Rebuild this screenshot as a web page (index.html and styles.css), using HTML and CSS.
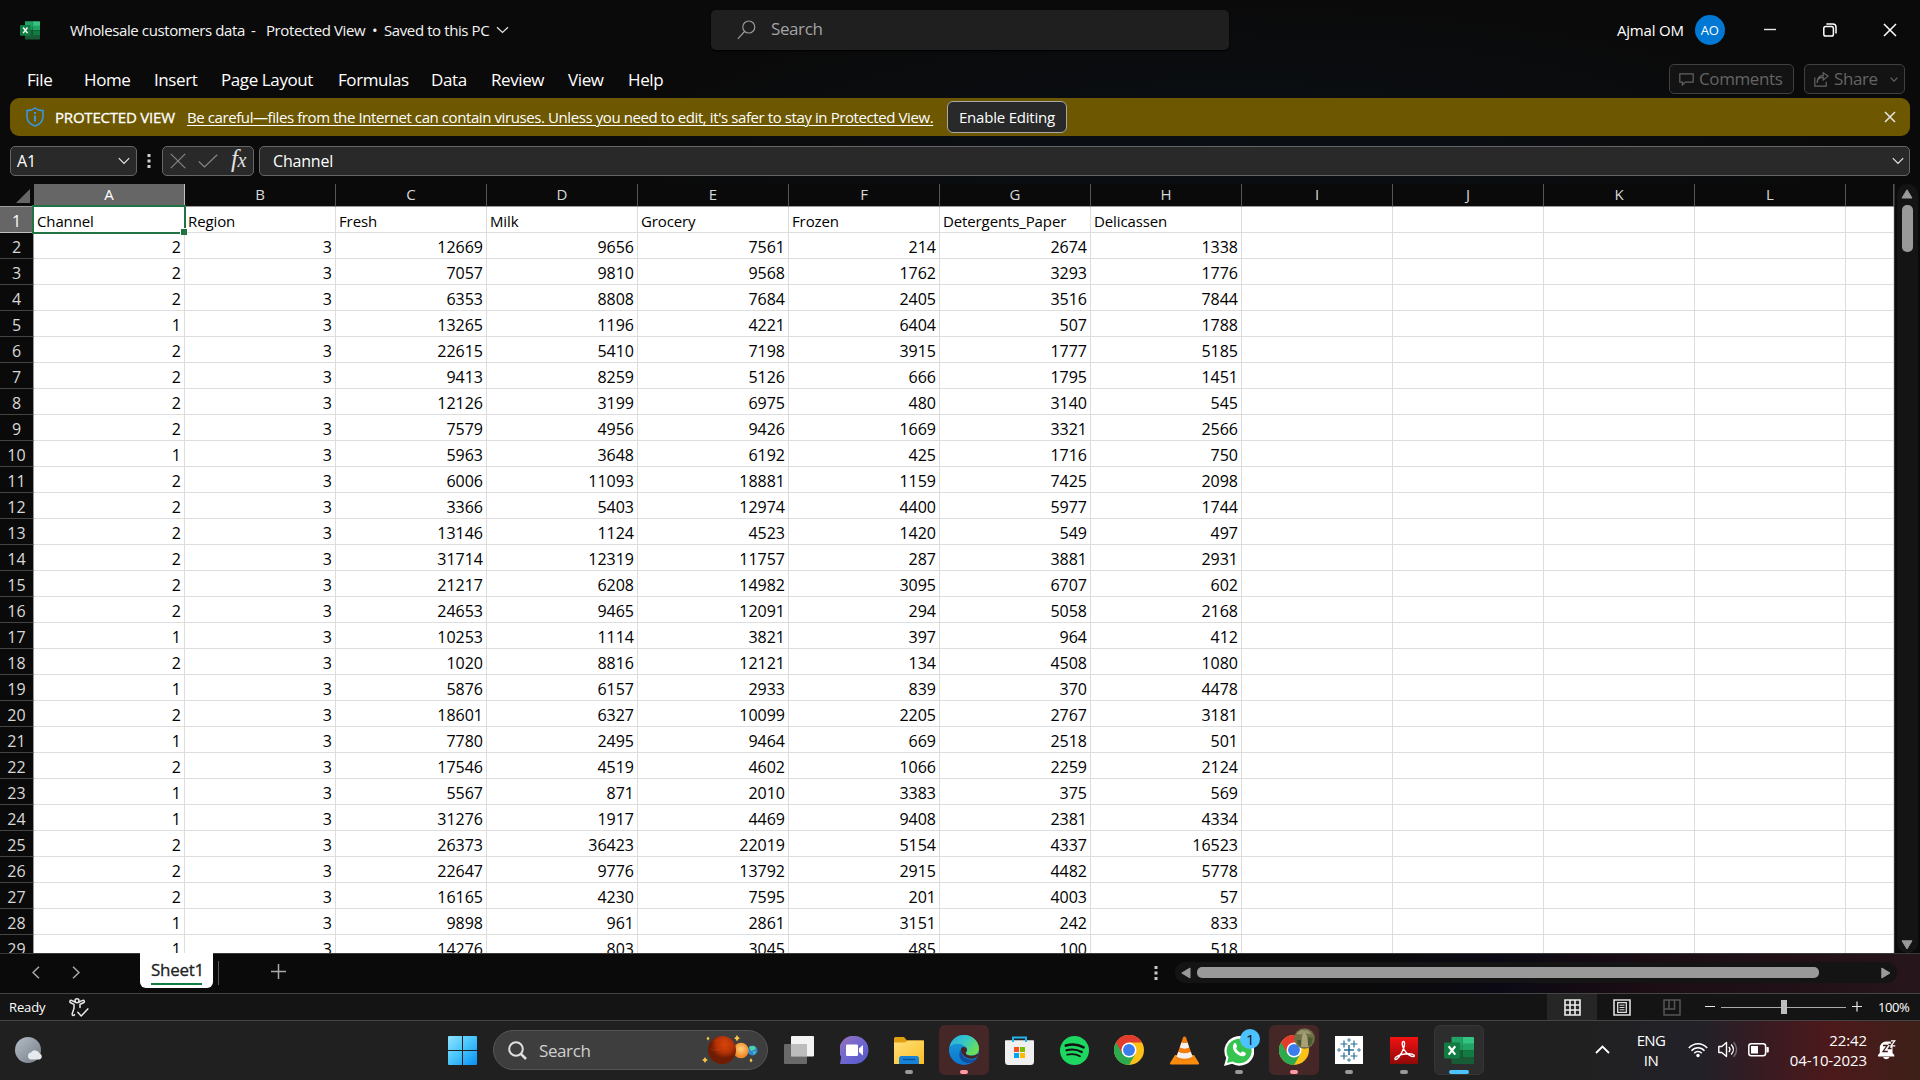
FILE: index.html
```html
<!DOCTYPE html>
<html lang="en">
<head>
<meta charset="utf-8">
<title>Wholesale customers data - Excel</title>
<link rel="stylesheet" href="styles.css">
</head>
<body>
<div class="screen">
  <header class="titlebar">
    <svg class="app-logo" width="20" height="20" viewBox="0 0 32 32"><use href="#excel"/></svg>
    <div class="doc-title"><span class="t1">Wholesale customers data</span><span class="t2">-</span><span class="t3">Protected View</span><span class="t4">•</span><span class="t5">Saved to this PC</span>
      <svg width="13" height="8" viewBox="0 0 13 8" class="line"><path d="M1 1.2l5.5 5.3L12 1.2"/></svg></div>
    <div class="search-top">
      <svg width="19" height="20" viewBox="0 0 19 20" class="line dim"><circle cx="11.8" cy="7" r="6"/><path d="M7.6 11.5L.8 18.8"/></svg>
      <span>Search</span>
    </div>
    <div class="account"><span>Ajmal OM</span><span class="avatar">AO</span></div>
    <div class="winbtns">
      <svg width="14" height="14" viewBox="0 0 14 14" class="line"><path d="M1 6.5h12" stroke-width="1.4"/></svg>
      <svg width="14" height="14" viewBox="0 0 14 14" class="line bold"><rect x=".8" y="3.4" width="9.6" height="9.6" rx="1.8"/><path d="M3.4 1h6.4A3.2 3.2 0 0 1 13 4.200v6.400"/></svg>
      <svg width="14" height="14" viewBox="0 0 14 14" class="line bold"><path d="M1 1l12 12M13 1L1 13"/></svg>
    </div>
  </header>

  <nav class="ribbon">
    <div class="tabs"><span>File</span><span>Home</span><span>Insert</span><span>Page Layout</span><span>Formulas</span><span>Data</span><span>Review</span><span>View</span><span>Help</span></div>
    <div class="ribbon-btn comments">
      <svg width="15" height="13" viewBox="0 0 15 13" class="line grey"><path d="M.8.8h13.400v8.400H6.200L3.400 12V9.200H.8z"/></svg><span>Comments</span>
    </div>
    <div class="ribbon-btn share">
      <svg width="15" height="15" viewBox="0 0 15 15" class="line grey"><path d="M.8 5.500v8.700h11.400V9.800M3.200 11c0-3.500 2-5.600 6-5.800V8l4.800-3.900L9.200.8v2.600C5.500 3.700 3.200 6.500 3.200 11z"/></svg><span>Share</span>
      <svg width="8" height="5" viewBox="0 0 8 5" class="line grey chev"><path d="M.6.6L4 4.200 7.400.6"/></svg>
    </div>
  </nav>

  <div class="protected">
    <svg class="shield" width="18" height="20" viewBox="0 0 18 20"><path d="M9 1C7 2.700 4.200 3.500 1 3.600V9.500c0 4.700 3 7.800 8 9.600 5-1.800 8-4.900 8-9.600V3.600C13.800 3.500 11 2.700 9 1z" fill="none" stroke="#3a96dd" stroke-width="1.600"/><path d="M9 8.500v6M9 5v2" stroke="#3a96dd" stroke-width="2"/></svg>
    <span class="pv">PROTECTED VIEW</span>
    <span class="warn">Be careful—files from the Internet can contain viruses. Unless you need to edit, it's safer to stay in Protected View.</span>
    <span class="enable">Enable Editing</span>
    <svg class="line close" width="12" height="12" viewBox="0 0 12 12"><path d="M1 1l10 10M11 1L1 11" stroke-width="1.500"/></svg>
  </div>

  <div class="formula">
    <div class="field namebox"><span>A1</span><svg width="12" height="8" viewBox="0 0 12 8" class="line"><path d="M.8 1.200L6 6.500l5.200-5.300"/></svg></div>
    <svg class="dots" width="4" height="14" viewBox="0 0 4 14"><path d="M.5 0h3v3h-3zM.5 5.500h3v3h-3zM.5 11h3v3h-3z" fill="#d0d0d0"/></svg>
    <div class="field fx">
      <svg width="16" height="16" viewBox="0 0 16 16" class="line mid"><path d="M.8.8l14.400 14.400M15.200.8L.8 15.200"/></svg>
      <svg width="20" height="14" viewBox="0 0 20 14" class="line mid"><path d="M.8 7.500L6.500 13 19.200.8"/></svg>
      <span class="fxi">f<small>x</small></span>
    </div>
    <div class="field input"><span>Channel</span><svg width="12" height="8" viewBox="0 0 12 8" class="line"><path d="M.8 1.200L6 6.500l5.200-5.300"/></svg></div>
  </div>

  <main class="work">
    <div class="sheet" id="sheet"></div>
    <div class="vscroll">
      <svg width="12" height="10" viewBox="0 0 12 10"><path d="M6 .8L11 9H1z" fill="#999" stroke="#999" stroke-linejoin="round"/></svg>
      <div class="vthumb"></div>
      <svg class="down" width="12" height="10" viewBox="0 0 12 10"><path d="M6 9L11 .8H1z" fill="#999" stroke="#999" stroke-linejoin="round"/></svg>
    </div>
  </main>

  <div class="sheetbar">
    <svg class="line nav-l" width="8" height="13" viewBox="0 0 8 13"><path d="M7 .8L1 6.500l6 5.700"/></svg>
    <svg class="line nav-r" width="8" height="13" viewBox="0 0 8 13"><path d="M1 .8l6 5.700-6 5.700"/></svg>
    <div class="sheet-tab"><span>Sheet1</span></div>
    <div class="sep"></div>
    <svg class="line add" width="15" height="15" viewBox="0 0 15 15"><path d="M7.500 0v15M0 7.500h15"/></svg>
    <svg class="dots hdots" width="4" height="14" viewBox="0 0 4 14"><path d="M.5 0h3v3h-3zM.5 5.500h3v3h-3zM.5 11h3v3h-3z" fill="#c8c8c8"/></svg>
    <div class="hscroll">
      <svg width="10" height="12" viewBox="0 0 10 12"><path d="M.8 6L9 11V1z" fill="#999" stroke="#999" stroke-linejoin="round"/></svg>
      <div class="hthumb"></div>
      <svg class="right" width="10" height="12" viewBox="0 0 10 12"><path d="M9 6L.8 11V1z" fill="#999" stroke="#999" stroke-linejoin="round"/></svg>
    </div>
  </div>

  <footer class="status">
    <span class="ready">Ready</span>
    <svg class="access" width="20" height="19" viewBox="0 0 20 19"><g fill="none" stroke="#e8e8e8" stroke-width="1.500" stroke-linecap="round" stroke-linejoin="round"><circle cx="8" cy="2.800" r="2"/><path d="M6 4L2.500 2.400C.8 2 .2 4 1.700 4.700L5 6.300v4L3.200 15.800c-.3 2 1.600 2.200 2.300.8M10 4l3.700-1.600c1.700-.4 2.300 1.600.8 2.300L11 6.300v3.200"/><path d="M8.800 14.300l3.400 3.600 6.600-7"/></g></svg>
    <div class="view on"><svg width="17" height="17" viewBox="0 0 17 17"><path d="M1 1h15v15H1zM6 1v15M11 1v15M1 6h15M1 11h15" fill="none" stroke="#eee" stroke-width="1.600"/></svg></div>
    <div class="view"><svg width="18" height="17" viewBox="0 0 18 17"><path d="M1 1h16v15H1z" fill="none" stroke="#ddd" stroke-width="1.600"/><path d="M4.700 3.700h8.600v9.600H4.700z" fill="none" stroke="#ddd" stroke-width="1.300"/><path d="M6.500 6.200h5M6.500 8.500h5M6.500 10.800h5" stroke="#ddd"/></svg></div>
    <div class="view"><svg width="18" height="17" viewBox="0 0 18 17"><path d="M1 1h16v15H1zM1 10h10.500V1M6 1v9" fill="none" stroke="#555" stroke-width="1.500"/></svg></div>
    <div class="zoom">
      <svg width="158" height="16" viewBox="0 0 158 16"><path d="M1 7.500h10M148 7.500h10M153 2.500v10" stroke="#e8e8e8" stroke-width="1.200"/><path d="M17 8.500h125" stroke="#aaa"/><path d="M77 1h6v14h-6z" fill="#bdbdbd"/></svg>
      <span>100%</span>
    </div>
  </footer>

  <div class="taskbar">
    <svg class="weather" width="28" height="27" viewBox="0 0 28 27"><circle cx="13" cy="13" r="13" fill="url(#moon)"/><path d="M15.500 22.500a3.600 3.600 0 0 1 .5-7 5 5 0 0 1 8.700.9 3.200 3.200 0 0 1-.2 6.100z" fill="#e6eaee"/></svg>
    <div class="apps">
      <div class="app"><svg width="29" height="29" viewBox="0 0 29 29"><path d="M0 1a1 1 0 0 1 1-1h13v14H0zM15 0h13a1 1 0 0 1 1 1v13H15zM0 15h14v14H1a1 1 0 0 1-1-1zM15 15h14v13a1 1 0 0 1-1 1H15z" fill="url(#win)"/></svg></div>
      <div class="pill">
        <svg width="19" height="19" viewBox="0 0 19 19" fill="none" stroke="#e0e0e0"><circle cx="8" cy="8" r="6.800" stroke-width="2"/><path d="M13 13l5 5" stroke-width="2.500"/></svg>
        <span>Search</span>
        <svg class="planets" width="56" height="30" viewBox="0 0 56 30"><circle cx="50.500" cy="15.500" r="5" fill="#2c86d8"/><path d="M47 12c3-2 6-1 7 1l-2 2-3 1zM51 17l3-1-2 4z" fill="#4fd6a0"/><circle cx="39" cy="15.500" r="7.700" fill="url(#sun)"/><circle cx="20" cy="15" r="14" fill="url(#mars)"/><path d="M12 6c4-2 8 0 13-1M8 14c6 3 12-2 20 1" stroke="#e0541a" stroke-width="1.500" fill="none" opacity=".2"/><path d="M3 22l1.200 2L6 25l-1.800 1L3 28l-1.200-2L0 25l1.800-1zM35 0l1.200 2L38 3.200l-1.800 1L35 6.500l-1.200-2.300-1.800-1L33.800 2zM6 1.500L7.500 3.500 6 5.500 4.500 3.500zM49 23l1.500 2.500L49 27.500l-1.500-2z" fill="#f6c544"/></svg>
      </div>
      <div class="app"><svg width="30" height="28" viewBox="0 0 30 28"><rect x="7" width="23" height="20.500" rx="1" fill="#f3f3f3"/><rect y="8" width="23" height="20" rx="1" fill="#777" opacity=".85"/><path d="M7 8h16v12.500H7z" fill="#bdbdbd"/></svg></div>
      <div class="app"><svg width="29" height="29" viewBox="0 0 29 29"><path d="M15 0a14 14 0 1 1-1 28H0l1.200-7A14 14 0 0 1 15 0z" fill="url(#chat)"/><rect x="6" y="8.500" width="12" height="11.500" rx="1.200" fill="#fff"/><path d="M19 12.500L23 9v10.500l-4-3.500z" fill="#fff"/></svg></div>
      <div class="app run"><svg width="30" height="27" viewBox="0 0 30 27"><path d="M0 1.500A1.500 1.500 0 0 1 1.500 0H10l3 3.500h17V8H0z" fill="#e0a010"/><path d="M0 5.500h11L13.500 3.500H29a1 1 0 0 1 1 1V27H0z" fill="url(#fold)"/><path d="M5 27v-5.500A2.500 2.500 0 0 1 7.500 19h15a2.500 2.500 0 0 1 2.500 2.500V27z" fill="#1683d8"/><path d="M9 22.500h12" stroke="#0b4f8c" stroke-width="1.300"/></svg></div>
      <div class="app run alert"><svg width="30" height="30" viewBox="0 0 30 30"><circle cx="15" cy="15" r="15" fill="url(#edgeb)"/><path d="M.5 12C3 3 9 0 15 0c9 0 15 6.500 15 13.500 0 5-4 7-7.500 7-4.500 0-6-1.500-5.500-3 1.500-1.600 1.800-3.500 0-5.500C12 7.500 4 7.500.5 12z" fill="url(#edgeg)"/><path d="M12 14.500c-4 5.500-.5 12.500 6 13.500 4.500.5 8.500-2 10-4.500-7 3-15.500.5-16-9z" fill="#134e9e"/><path d="M12 13.500c2-2.800 6-1.500 6 1.500 0 1.500-1.500 2-1.200 3.300.4 1.700 2.800 2.600 6 2.500 2.500 0 4.500-1 5.700-2 1 .6 1 1 .5 1.700-2 2.700-5.500 3.500-8 3-5-.5-9.500-5-9-10z" fill="#462426"/></svg></div>
      <div class="app"><svg width="29" height="29" viewBox="0 0 29 29"><path d="M8 6V1.500h13V6" fill="none" stroke="#22b2ea" stroke-width="2"/><path d="M0 5a.8.800 0 0 1 .8-.8h27.400A.8.800 0 0 1 29 5v20.500a3.500 3.500 0 0 1-3.500 3.500h-22A3.500 3.500 0 0 1 0 25.500z" fill="#efefef"/><path d="M8 1.500V6M21 1.500V6" stroke="#22b2ea" stroke-width="2"/><path d="M9 11h5v5H9z" fill="#f25022"/><path d="M15 11h5v5h-5z" fill="#7fba00"/><path d="M9 17h5v5H9z" fill="#00a4ef"/><path d="M15 17h5v5h-5z" fill="#ffb900"/></svg></div>
      <div class="app"><svg width="29" height="29" viewBox="0 0 29 29"><circle cx="14.500" cy="14.500" r="14.500" fill="#1ed760"/><g fill="none" stroke="#121212" stroke-linecap="round"><path d="M5.800 9.600c6-1.800 12.500-1.200 17.800 1.700" stroke-width="2.600"/><path d="M6.500 14.300c5.500-1.500 10.700-.8 15.300 1.700" stroke-width="2.200"/><path d="M7.200 18.700c4.500-1.200 9-.7 12.800 1.500" stroke-width="1.800"/></g></svg></div>
      <div class="app"><svg width="30" height="30" viewBox="0 0 48 48"><use href="#chrome"/></svg></div>
      <div class="app"><svg width="29" height="29" viewBox="0 0 29 29"><path d="M5 19h19l5 8a1 1 0 0 1-1 1.500H1A1 1 0 0 1 0 27z" fill="#f98b0e"/><path d="M13 1.500a1.600 1.600 0 0 1 3 0L23 22c-3 3.500-14 3.500-17 0z" fill="#f47d0c"/><path d="M11.500 6.500c2 .8 4 .8 6 0l1.700 5c-3 1.500-6.400 1.500-9.400 0zM8.300 15.800c4 2 8.400 2 12.400 0l1.800 5c-5 2.500-11 2.500-16 0z" fill="#f2f2f2"/></svg></div>
      <div class="app run"><svg class="wa" width="30" height="31" viewBox="0 0 30 31"><path d="M0 31l2.200-8A15 14.800 0 1 1 8 28.800z" fill="#fff"/><path d="M3 28l1.500-5.500A12.500 12.300 0 1 1 8.600 26.500z" fill="#35c450"/><path d="M10 8.500c.7-.8 1.800-.6 2.100.2l1 2.500c.2.600-.9 1.600-1.100 2 1.100 2.300 2.800 3.800 5 4.700.7-.6 1.300-1.800 1.900-1.500l2.600 1.300c.7.500 0 2.800-1.300 3.300-2.600 1-6-.6-8.300-2.900C9.300 15.800 7.700 11.500 10 8.500z" fill="#fff"/></svg><b class="badge">1</b></div>
      <div class="app run alert"><svg width="30" height="30" viewBox="0 0 48 48"><use href="#chrome"/></svg>
        <svg class="face" width="21" height="21" viewBox="0 0 21 21"><circle cx="10.500" cy="10.500" r="10.300" fill="#6f7046"/><path d="M2 6l5-4 7 .5 4 4-4-1-7 1z" fill="#99956c"/><path d="M7 19l1-11 2.500-4L13 8l1.500 11z" fill="#a9a07a"/><path d="M3 12h4v6l-3-2zM14 9l5 1-2 7-3 1z" fill="#4d5a2f"/></svg></div>
      <div class="app run"><svg width="28" height="28" viewBox="0 0 28 28"><path d="M0 0h28v28H0z" fill="#fff"/><g stroke="#2b7098" fill="none"><path d="M14 9v10M9 14h10" stroke-width="1.600"/><path d="M9 4.500v7M5.500 8h7M19 4.500v7M15.500 8h7M9 16.500v7M5.500 20h7M19 16.500v7M15.500 20h7" stroke-width="1.200"/><path d="M14 2v4M12 4h4M14 22v4M12 24h4M4 12v4M2 14h4M24 12v4M22 14h4" stroke-width=".9"/></g></svg></div>
      <div class="app run"><svg width="28" height="27" viewBox="0 0 28 27"><path d="M0 0h28v27H0z" fill="url(#pdf)"/><path d="M13.500 4.500c-2 0-1.500 4.500.5 8 2 3.700 7 7.500 9.500 7 2-.6.500-2.700-4-2.800-5 0-11 1.300-13.500 3.300-2.200 1.800-.8 3.300 1 2 2.500-1.800 6-8.500 7-12 .8-3 .8-5.500-.5-5.500z" fill="none" stroke="#fff" stroke-width="1.400"/></svg></div>
      <div class="app run active"><svg width="30" height="30" viewBox="0 0 32 32"><use href="#excel"/></svg></div>
    </div>
    <div class="tray">
      <svg class="up" width="15" height="9" viewBox="0 0 15 9"><path d="M1 8l6.500-6.500L14 8" fill="none" stroke="#fff" stroke-width="1.800"/></svg>
      <div class="lang"><span>ENG</span><span>IN</span></div>
      <svg class="wifi" width="20" height="16" viewBox="0 0 20 16" fill="none" stroke="#fff" stroke-width="1.500"><path d="M.8 6C6 .2 14 .2 19.200 6M3.500 8.700c3.700-4 9.300-4 13 0M6.200 11.300c2.200-2.300 5.400-2.300 7.600 0"/><circle cx="10" cy="13.500" r="1.700" fill="#fff" stroke="none"/></svg>
      <svg class="snd" width="20" height="17" viewBox="0 0 20 17" fill="none" stroke="#fff" stroke-width="1.400"><path d="M.8 5.500h3L8.500 1.500v14l-4.700-4h-3z" stroke-linejoin="round"/><path d="M10.800 6c1.400 1.500 1.400 3.500 0 5M13.200 3.500c2.800 3 2.800 7 0 10"/><path d="M15.600 1.200c4 4.400 4 10.200 0 14.600" opacity=".35"/></svg>
      <svg class="bat" width="21" height="14" viewBox="0 0 21 14"><rect x=".8" y=".8" width="16.800" height="12" rx="2.500" fill="none" stroke="#fff" stroke-width="1.500"/><path d="M3 3h7v7.600H3zM18.500 4h1.500a.8.800 0 0 1 .8.800v4a.8.800 0 0 1-.8.800h-1.500z" fill="#fff"/></svg>
      <div class="clock"><span>22:42</span><span>04-10-2023</span></div>
      <svg class="bell" width="18" height="20" viewBox="0 0 18 20"><path d="M1.800 13V8A6.300 6.300 0 0 1 8 1.500h4.500L14.500 7v6l1.800 2v1.500H0V15zM5 17h6.500a3.300 2.600 0 0 1-6.500 0z" fill="#fff"/><path d="M5 5.500h4.200L5 11.500h4.800M10.500 4.500h2.700l-2.700 4h3" fill="none" stroke="#3b1a18" stroke-width="1.300"/><path d="M13 .8h3.800L13 5.800h4.300" fill="none" stroke="#fff" stroke-width="1.300"/></svg>
    </div>
  </div>
</div>

<svg width="0" height="0" class="defs">
  <defs>
    <linearGradient id="win" x1="0" y1="0" x2="1" y2="1"><stop offset="0" stop-color="#8fe3ff"/><stop offset=".5" stop-color="#45c3fb"/><stop offset="1" stop-color="#0a8ff5"/></linearGradient>
    <linearGradient id="moon" x1="0" y1="0" x2="1" y2="1"><stop offset="0" stop-color="#b4bcc6"/><stop offset="1" stop-color="#757d86"/></linearGradient>
    <linearGradient id="chat" x1="0" y1="0" x2="1" y2="1"><stop offset="0" stop-color="#9a70b8"/><stop offset=".5" stop-color="#6f68d0"/><stop offset="1" stop-color="#5457c8"/></linearGradient>
    <linearGradient id="fold" x1="0" y1="0" x2="1" y2="1"><stop offset="0" stop-color="#ffe07a"/><stop offset="1" stop-color="#fbbf25"/></linearGradient>
    <linearGradient id="edgeb" x1="0" y1="0" x2="0" y2="1"><stop offset="0" stop-color="#1ba0dc"/><stop offset="1" stop-color="#0b74d0"/></linearGradient>
    <linearGradient id="edgeg" x1="0" y1="0" x2="1" y2=".6"><stop offset="0" stop-color="#2aa8e0"/><stop offset=".5" stop-color="#35c6c8"/><stop offset="1" stop-color="#6be052"/></linearGradient>
    <radialGradient id="mars" cx=".6" cy=".3"><stop offset="0" stop-color="#d8450a"/><stop offset=".6" stop-color="#b53206"/><stop offset="1" stop-color="#6e1c04"/></radialGradient>
    <radialGradient id="sun" cx=".5" cy=".4"><stop offset="0" stop-color="#ffd27a"/><stop offset="1" stop-color="#f08a2c"/></radialGradient>
    <linearGradient id="pdf" x1="0" y1="0" x2="0" y2="1"><stop offset="0" stop-color="#f31212"/><stop offset="1" stop-color="#8f0808"/></linearGradient>
    <g id="excel">
      <path d="M8 2h12v9H8z" fill="#21a366"/><path d="M20 2h11a1 1 0 0 1 1 1v8H20z" fill="#33c481"/>
      <path d="M8 9h12v7.500H8z" fill="#1f9a5e"/><path d="M20 9h12v7.500H20z" fill="#21a366"/>
      <path d="M8 16.500h12V24H8z" fill="#185c37"/><path d="M20 16.500h12V24H20z" fill="#107c41"/>
      <path d="M8 24h24v6a1 1 0 0 1-1 1H9a1 1 0 0 1-1-1z" fill="#185c37"/>
      <rect y="8" width="17" height="17" rx="1.500" fill="#107c41"/>
      <path d="M5 12l7 9M12 12l-7 9" stroke="#fff" stroke-width="2.300"/>
    </g>
    <g id="chrome">
      <circle cx="24" cy="24" r="24" fill="#fbc116"/>
      <path d="M3.200 12A24 24 0 0 0 24 48l10.400-18L24 24z" fill="#2da94f"/>
      <path d="M3.200 12A24 24 0 0 1 44.800 12H24L13.600 30z" fill="#e33b2e"/>
      <circle cx="24" cy="24" r="12" fill="#fff"/><circle cx="24" cy="24" r="9.500" fill="#3b7ded"/>
    </g>
  </defs>
</svg>
<script src="sheet.js"></script>
</body>
</html>
```
FILE: styles.css
```css
* { box-sizing: border-box; }
body { margin: 0; background: #0a0a0a; font-family: "Open Sans", "Noto Sans", sans-serif; letter-spacing: -0.4px; color: #fff; overflow: hidden; }
svg { display: block; flex: none; }
.defs { position: absolute; }
.line { fill: none; stroke: #e6e6e6; stroke-width: 1.2; }
.line.bold { stroke: #fff; stroke-width: 1.5; }
.line.dim { stroke: #999; }
.line.mid { stroke: #858585; }
.line.grey { stroke: #646464; }
.screen { width: 1920px; height: 1080px; display: flex; flex-direction: column; white-space: nowrap;
  background: radial-gradient(ellipse 620px 150px at 1230px 150px, #0a0f15, #0a0a0a); }

.titlebar { height: 60px; display: flex; align-items: flex-start; padding-left: 20px; font-size: 15px; }
.app-logo { margin: 20px 0 0; }
.doc-title { display: flex; align-items: center; width: 670px; height: 60px; padding-left: 30px; color: #f4f4f4; }
.t1 { width: 181px; } .t2 { width: 15px; } .t3 { width: 106px; } .t4 { width: 12px; } .t5 { width: 112px; }
.search-top { width: 518px; height: 40px; margin: 10px 0 0 1px; padding-left: 26px; display: flex; align-items: center; gap: 15px; background: #1f1f1f; border-radius: 5px; font-size: 17px; color: #a3a3a3; box-shadow: 0 1px 2px #000; }
.search-top span { padding-bottom: 3px; }
.account { display: flex; align-items: center; height: 60px; margin-left: 388px; gap: 11px; letter-spacing: -0.2px; }
.avatar { width: 30px; height: 30px; line-height: 30px; border-radius: 50%; background: #0078d4; font-size: 13px; text-align: center; }
.winbtns { display: flex; align-items: center; height: 60px; gap: 46px; margin-left: 38px; }

.ribbon { height: 38px; display: flex; padding-top: 4px; }
.tabs { display: grid; grid-template-columns: 57px 70px 67px 117px 93px 60px 77px 60px 60px; width: 1669px; padding-left: 27px; line-height: 32px; font-size: 17px; }
.ribbon-btn { height: 30px; display: flex; align-items: center; border: 1px solid #404040; border-radius: 5px; background: #131313; color: #646464; font-size: 17px; line-height: 28px; }
.ribbon-btn span { padding-bottom: 1px; }
.comments { width: 125px; padding-left: 9px; gap: 5px; }
.share { width: 101px; margin-left: 10px; padding-left: 9px; gap: 5px; }
.share .chev { margin-left: 7px; }

.protected { height: 38px; margin: 0 10px; padding-left: 16px; display: flex; align-items: center; background: #6d5700; border-radius: 9px; font-size: 15px; }
.pv { margin-left: 11px; width: 132px; letter-spacing: -0.2px; -webkit-text-stroke: .3px #fff; }
.warn { width: 760px; letter-spacing: -0.41px; text-decoration: underline; text-underline-offset: 2px; text-decoration-thickness: 1px; }
.enable { width: 120px; height: 32px; line-height: 30px; text-align: center; border: 1px solid #a8a8a8; border-radius: 6px; background: #292929; letter-spacing: -0.2px; }
.close { margin-left: 817px; }

.formula { height: 48px; padding: 10px 10px 8px; display: flex; align-items: center; }
.field { height: 30px; display: flex; align-items: center; background: #292929; border: 1px solid #666; border-radius: 5px; }
.namebox { width: 127px; padding: 0 6px; justify-content: space-between; font-size: 16px; letter-spacing: 0; }
.dots { margin: 0 11px 0 10px; }
.fx { width: 92px; padding-left: 7px; gap: 12px; }
.fxi { font: italic 25px/26px "Liberation Serif", serif; color: #e0e0e0; padding: 0 0 4px 1px; }
.fxi small { font-size: 20px; }
.input { width: 1651px; margin-left: 5px; padding: 0 5px 0 13px; justify-content: space-between; font-size: 16px; letter-spacing: -0.2px; }

.work { height: 769px; display: flex; }
.sheet { width: 1895px; overflow: hidden; border-right: 1px solid #333; background: #fff; color: #000; font-size: 16px; letter-spacing: 0; display: grid; grid-template-columns: 34px repeat(12, 151px) 48px; grid-template-rows: 23px; grid-auto-rows: 26px; }
.colhead { background: #0a0a0a; color: #d8d8d8; text-align: center; line-height: 21px; border-right: 1px solid #555; border-bottom: 1px solid #9a9a9a; font-size: 15px; }
.corner { border-right-color: #0a0a0a; display: flex; justify-content: flex-end; padding: 5px 3px 0 0; }
.rowhead { background: #0a0a0a; color: #d8d8d8; text-align: center; line-height: 29px; border-right: 1px solid #9a9a9a; border-bottom: 1px solid #444; }
.colhead.sel, .rowhead.sel { background: #666; color: #fff; border-color: #c0c0c0; }
.cell { border-right: 1px solid #dedede; border-bottom: 1px solid #dedede; padding: 0 3px; line-height: 29px; text-align: right; }
.cell.text { text-align: left; font-size: 15px; letter-spacing: -0.12px; }
.cell.cursor { position: relative; }
.cell.cursor::before { content: ""; position: absolute; inset: -2px -2px -2px -2px; border: 2px solid #217346; }
.cell.cursor::after { content: ""; position: absolute; right: -3px; bottom: -3px; width: 6px; height: 6px; background: #217346; border: solid #fff; border-width: 1px 0 0 1px; }
.vscroll { width: 21px; margin-left: 2px; padding: 5px 1px 3px 0; background: #141414; border-radius: 10px; display: flex; flex-direction: column; align-items: center; }
.vthumb { width: 11px; height: 47px; margin-top: 6px; border-radius: 5px; background: #999; }
.down { margin-top: auto; }

.sheetbar { height: 41px; display: flex; align-items: flex-start; background: linear-gradient(90deg, #0a0a0a 1350px, #0b0a14 1500px, #1c0c14 1650px, #26151a 1920px); border-top: 1px solid #3a3a3a; border-bottom: 1px solid #444; }
.sheetbar > .line { stroke: #aaa; stroke-width: 1.5; margin-top: 12px; }
.nav-l { margin-left: 32px; } .nav-r { margin-left: 32px; }
.sheet-tab { width: 73px; height: 35px; margin: -1px 0 0 60px; padding: 3px 11px 0; background: #fff; border-radius: 0 0 6px 6px; color: #222; font-size: 17px; letter-spacing: -0.3px; line-height: 27px; -webkit-text-stroke: .3px #222; }
.sheet-tab span { display: block; height: 29px; border-bottom: 2px solid #107c41; }
.sep { width: 1px; height: 24px; margin: 7px 0 0 5px; background: #555; }
.sheetbar > .add { margin: 10px 0 0 52px; }
.hdots { margin: 12px 0 0 868px; }
.hscroll { width: 722px; height: 21px; margin: 8px 0 0 17px; padding: 0 6px; display: flex; align-items: center; background: #141414; border-radius: 10px; }
.hthumb { width: 622px; height: 11px; margin-left: 6px; border-radius: 5px; background: #999; }
.right { margin-left: auto; }

.status { height: 27px; display: flex; align-items: center; background: #141414; border-bottom: 1px solid #444; font-size: 13px; letter-spacing: -0.1px; }
.ready { width: 60px; margin-left: 9px; }
.access { margin-right: 1458px; }
.view { width: 50px; height: 26px; display: flex; justify-content: center; align-items: center; }
.view.on { background: #262626; }
.zoom { display: flex; align-items: center; margin-left: 7px; gap: 16px; letter-spacing: -0.4px; }

.taskbar { height: 59px; display: flex; align-items: center; background: linear-gradient(90deg, #202020 1580px, #222129 1700px, #371b22 1760px, #4c191b 1830px, #3d2018 1920px); }
.weather { margin-left: 15px; }
.apps { display: flex; align-items: center; gap: 5px; margin-left: 394px; height: 50px; margin-top: -1px; }
.app { position: relative; width: 50px; height: 50px; border-radius: 6px; display: flex; align-items: center; justify-content: center; }
.run::after { content: ""; position: absolute; bottom: 1px; left: 21px; width: 8px; height: 4px; border-radius: 2px; background: #999; }
.alert { background: #462728; }
.alert::after { background: #ff99a4; }
.active { background: #2d2d2d; border: 1px solid #363636; }
.active::after { width: 20px; left: 14px; bottom: 0; background: #4cc2ff; }
.pill { width: 275px; height: 40px; margin: 0 1px 0 1px; padding: 0 9px 0 14px; display: flex; align-items: center; background: #3e3e3e; border: 1px solid #555; border-radius: 20px; font-size: 17px; color: #d0d0d0; }
.pill span { margin-left: 12px; }
.planets { margin-left: auto; }
.badge { position: absolute; left: 26px; top: 4px; width: 20px; height: 20px; border-radius: 50%; background: #4cc2ff; color: #111; font: 15px/20px "Open Sans", sans-serif; text-align: center; }
.face { position: absolute; left: 25px; top: 3px; }
.tray { display: flex; align-items: center; height: 59px; margin: -2px 0 0 111px; font-size: 15px; }
.lang, .clock { display: flex; flex-direction: column; line-height: 20px; }
.lang { width: 50px; margin-left: 16px; text-align: center; letter-spacing: -0.6px; }
.wifi { margin-left: 12px; }
.snd { margin-left: 10px; } .bat { margin-left: 10px; }
.clock { width: 78px; margin-left: 20px; text-align: right; letter-spacing: -0.1px; }
.bell { margin-left: 11px; }
```
FILE: sheet.js
```js
// First entry of each record is column A; column B (Region) is 3 in every record.
const fields = ["Channel", "Region", "Fresh", "Milk", "Grocery", "Frozen", "Detergents_Paper", "Delicassen"];
const records = `2 12669 9656 7561 214 2674 1338
2 7057 9810 9568 1762 3293 1776
2 6353 8808 7684 2405 3516 7844
1 13265 1196 4221 6404 507 1788
2 22615 5410 7198 3915 1777 5185
2 9413 8259 5126 666 1795 1451
2 12126 3199 6975 480 3140 545
2 7579 4956 9426 1669 3321 2566
1 5963 3648 6192 425 1716 750
2 6006 11093 18881 1159 7425 2098
2 3366 5403 12974 4400 5977 1744
2 13146 1124 4523 1420 549 497
2 31714 12319 11757 287 3881 2931
2 21217 6208 14982 3095 6707 602
2 24653 9465 12091 294 5058 2168
1 10253 1114 3821 397 964 412
2 1020 8816 12121 134 4508 1080
1 5876 6157 2933 839 370 4478
2 18601 6327 10099 2205 2767 3181
1 7780 2495 9464 669 2518 501
2 17546 4519 4602 1066 2259 2124
1 5567 871 2010 3383 375 569
1 31276 1917 4469 9408 2381 4334
2 26373 36423 22019 5154 4337 16523
2 22647 9776 13792 2915 4482 5778
2 16165 4230 7595 201 4003 57
1 9898 961 2861 3151 242 833
1 14276 803 3045 485 100 518`.split("\n").map(r => {
  const v = r.split(" ");
  return [v[0], "3", ...v.slice(1)];
});

let html = '<div class="colhead corner"><svg width="14" height="14"><path d="M14 0v14H0z" fill="#666"/></svg></div>';
for (const c of "ABCDEFGHIJKL") html += `<div class="colhead${c === "A" ? " sel" : ""}">${c}</div>`;
html += '<div class="colhead"></div>';
[fields, ...records].forEach((row, i) => {
  html += `<div class="rowhead${i ? "" : " sel"}">${i + 1}</div>`;
  for (let c = 0; c < 13; c++) {
    const cls = "cell" + (i ? "" : " text") + (!i && !c ? " cursor" : "");
    html += `<div class="${cls}">${row[c] || ""}</div>`;
  }
});
document.getElementById("sheet").innerHTML = html;
```
